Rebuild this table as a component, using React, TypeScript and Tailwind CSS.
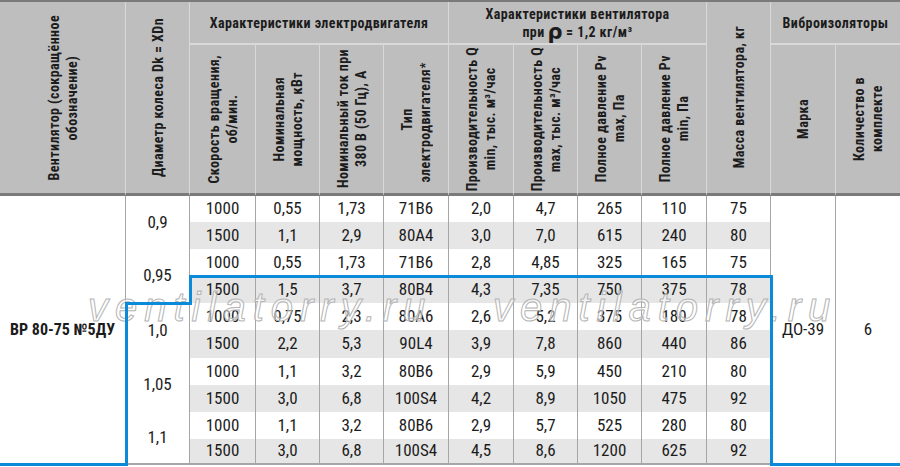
import React from "react";

type Row = string[];

const rows: Row[] = [
  ["1000", "0,55", "1,73", "71В6", "2,0", "4,7", "265", "110", "75"],
  ["1500", "1,1", "2,9", "80А4", "3,0", "7,0", "615", "240", "80"],
  ["1000", "0,55", "1,73", "71В6", "2,8", "4,85", "325", "165", "75"],
  ["1500", "1,5", "3,7", "80В4", "4,3", "7,35", "750", "375", "78"],
  ["1000", "0,75", "2,3", "80А6", "2,6", "5,2", "375", "180", "78"],
  ["1500", "2,2", "5,3", "90L4", "3,9", "7,8", "860", "440", "86"],
  ["1000", "1,1", "3,2", "80В6", "2,9", "5,9", "450", "210", "80"],
  ["1500", "3,0", "6,8", "100S4", "4,2", "8,9", "1050", "475", "92"],
  ["1000", "1,1", "3,2", "80В6", "2,9", "5,7", "525", "280", "80"],
  ["1500", "3,0", "6,8", "100S4", "4,5", "8,6", "1200", "625", "92"],
];

const diameters = ["0,9", "0,95", "1,0", "1,05", "1,1"];

function VHead({
  children,
  className = "",
}: {
  children: React.ReactNode;
  className?: string;
}) {
  return (
    <div
      className={`flex items-center justify-center bg-[#bebebe] border-r border-r-[#d9d9d9] border-b-[3px] border-b-[#7a7a7a] ${className}`}
    >
      <div className="[writing-mode:vertical-rl] rotate-180 whitespace-nowrap text-center font-bold text-[14px] leading-[18px] tracking-[0.03em] text-[#1c1c1c]">
        {children}
      </div>
    </div>
  );
}

function GroupHead({
  children,
  className = "",
}: {
  children: React.ReactNode;
  className?: string;
}) {
  return (
    <div
      className={`flex flex-col items-center justify-center whitespace-nowrap bg-[#bebebe] border-r border-r-[#d9d9d9] border-b-2 border-b-[#d9d9d9] font-bold text-[14px] leading-[18px] tracking-[0.03em] text-[#1c1c1c] text-center ${className}`}
    >
      {children}
    </div>
  );
}

export default function App() {
  const bodyCells: React.ReactNode[] = [];
  rows.forEach((r, i) => {
    const last = i === rows.length - 1;
    if (i === 0) {
      bodyCells.push(
        <div
          key="model"
          className="row-span-10 flex items-center justify-center whitespace-nowrap border-r border-r-[#a6a6a6] border-b-2 border-b-[#a6a6a6] bg-white font-bold text-[16px] text-[#1c1c1c]"
        >
          ВР 80-75 №5ДУ
        </div>
      );
    }
    if (i % 2 === 0) {
      bodyCells.push(
        <div
          key={`d${i}`}
          className={`row-span-2 flex items-center justify-center border-r border-r-[#a6a6a6] bg-white text-[17px] text-[#1c1c1c] ${
            i === 8 ? "border-b-2 border-b-[#a6a6a6]" : ""
          }`}
        >
          {diameters[i / 2]}
        </div>
      );
    }
    r.forEach((v, j) => {
      bodyCells.push(
        <div
          key={`c${i}-${j}`}
          className={`flex items-center justify-center border-r border-r-[#a6a6a6] text-[17px] text-[#1c1c1c] ${
            i % 2 === 1 ? "bg-[#e6e6e6]" : "bg-white"
          } ${last ? "border-b-2 border-b-[#a6a6a6]" : ""}`}
        >
          {v}
        </div>
      );
    });
    if (i === 0) {
      bodyCells.push(
        <div
          key="mark"
          className="row-span-10 flex items-center justify-center border-r border-r-[#a6a6a6] border-b-2 border-b-[#a6a6a6] bg-white text-[17px] text-[#1c1c1c]"
        >
          ДО-39
        </div>
      );
      bodyCells.push(
        <div
          key="qty"
          className="row-span-10 flex items-center justify-center border-b-2 border-b-[#a6a6a6] bg-white text-[17px] text-[#1c1c1c]"
        >
          6
        </div>
      );
    }
  });

  return (
    <div className="relative w-[900px] h-[467px] overflow-hidden bg-white font-['Roboto_Condensed','DejaVu_Sans_Condensed',sans-serif]">
      <div className="grid grid-cols-[126px_64px_66px_64px_64px_65px_65px_64px_64px_65px_64px_65px_64px] grid-rows-[43px_151px_26px_27px_27px_27px_27px_28px_27px_27px_27px_26px] border-t-2 border-t-[#7a7a7a]">
        <VHead className="row-span-2">
          Вентилятор (сокращённое
          <br />
          обозначение)
        </VHead>
        <VHead className="row-span-2">Диаметр колеса Dk = XDn</VHead>
        <GroupHead className="col-span-4">Характеристики электродвигателя</GroupHead>
        <GroupHead className="col-span-4">
          <span>Характеристики вентилятора</span>
          <span className="flex items-center gap-[3px]">
            при <span className="text-[21px] leading-[18px] font-['DejaVu_Sans',sans-serif]">ρ</span> = 1,2 кг/м³
          </span>
        </GroupHead>
        <VHead className="row-span-2">Масса вентилятора, кг</VHead>
        <GroupHead className="col-span-2 border-r-0">Виброизоляторы</GroupHead>

        <VHead>
          Скорость вращения,
          <br />
          об/мин.
        </VHead>
        <VHead>
          Номинальная
          <br />
          мощность, кВт
        </VHead>
        <VHead>
          Номинальный ток при
          <br />
          380 В (50 Гц), А
        </VHead>
        <VHead>
          Тип
          <br />
          электродвигателя{" "}
          <sup className="mt-[3px] text-[13px]">*</sup>
        </VHead>
        <VHead>
          Производительность Q
          <br />
          min, тыс. м³/час
        </VHead>
        <VHead>
          Производительность Q
          <br />
          max, тыс. м³/час
        </VHead>
        <VHead>
          Полное давление Pv
          <br />
          max, Па
        </VHead>
        <VHead>
          Полное давление Pv
          <br />
          min, Па
        </VHead>
        <VHead>Марка</VHead>
        <VHead className="border-r-0">
          Количество в
          <br />
          комплекте
        </VHead>

        {bodyCells}
      </div>

      <div className="absolute left-[88px] top-[287px] text-[40px] leading-[40px] italic tracking-[7px] text-white/50 [-webkit-text-stroke:1px_#b4b4b4] font-['Liberation_Sans',sans-serif] pointer-events-none">
        ventilatorry.ru
      </div>
      <div className="absolute left-[493px] top-[287px] text-[40px] leading-[40px] italic tracking-[7px] text-white/50 [-webkit-text-stroke:1px_#b4b4b4] font-['Liberation_Sans',sans-serif] pointer-events-none">
        ventilatorry.ru
      </div>

      <svg
        className="absolute left-0 top-0 pointer-events-none"
        width="900"
        height="467"
        viewBox="0 0 900 467"
      >
        <polyline
          points="0,464.5 126.5,464.5 126.5,303.5 190.5,303.5 190.5,276.5 771.5,276.5 771.5,464.5 900,464.5"
          fill="none"
          stroke="#0a8ad8"
          strokeWidth="3"
        />
      </svg>
    </div>
  );
}
